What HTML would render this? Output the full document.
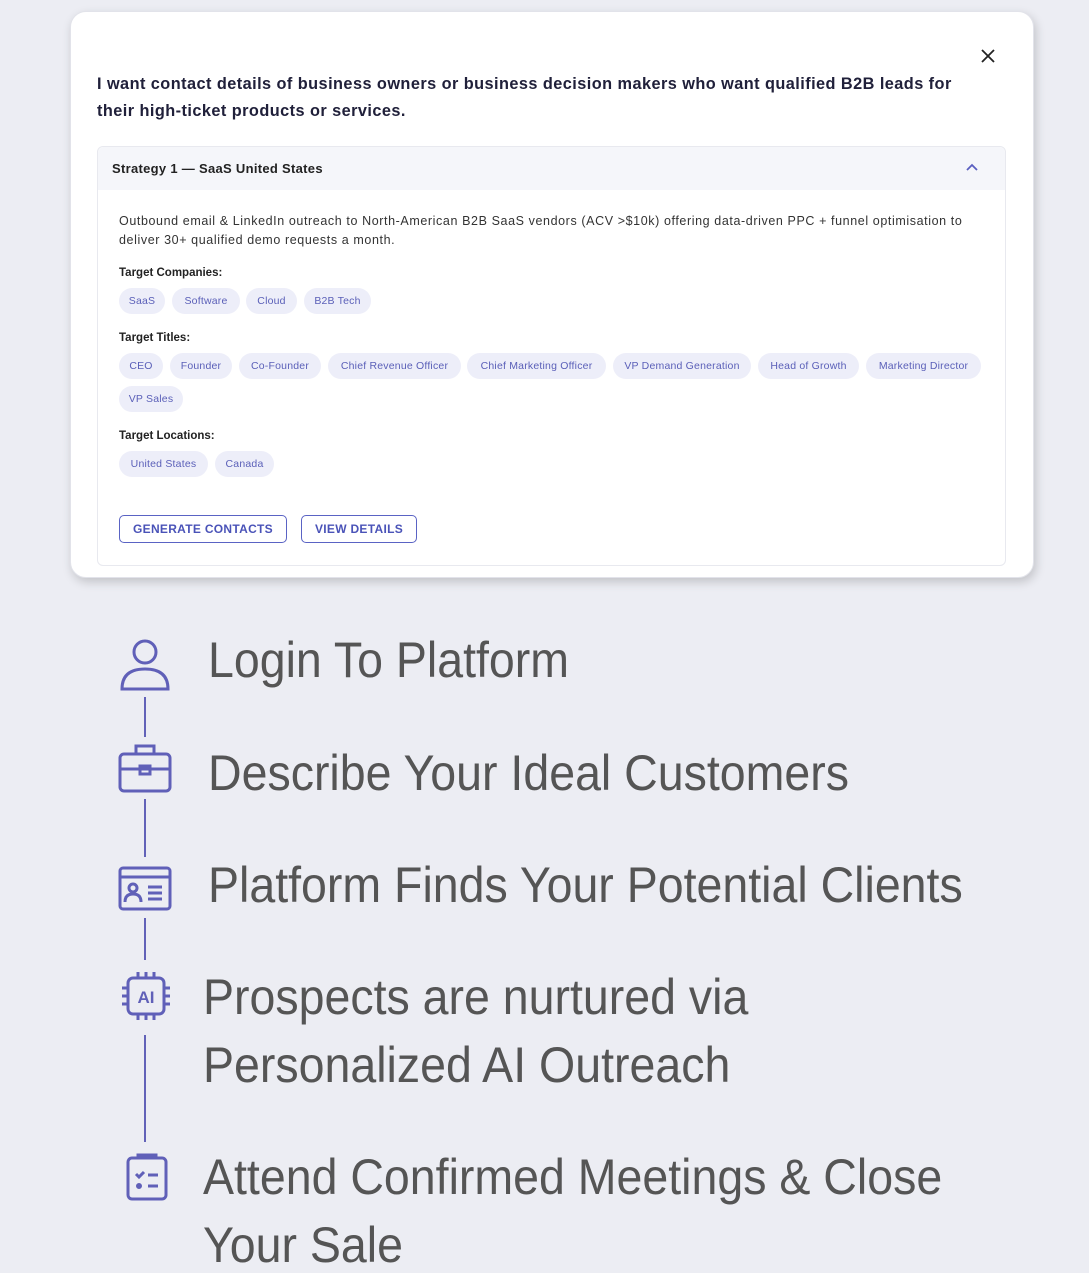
<!DOCTYPE html>
<html><head><meta charset="utf-8"><style>
*{margin:0;padding:0;box-sizing:border-box}
body{width:1089px;height:1273px;background:#ecedf3;font-family:"Liberation Sans",sans-serif;position:relative;overflow:hidden}
.a{position:absolute}
.card{left:70px;top:11px;width:964px;height:567px;background:#fff;border-radius:16px;box-shadow:2px 4px 10px rgba(0,0,0,.18);border:1px solid #e2e3ea}
.panel{left:97px;top:146px;width:909px;height:420px;border:1px solid #e8e9ef;border-radius:6px;background:#fff}
.ph{left:98px;top:147px;width:907px;height:43px;background:#f5f6fa;border-radius:6px 6px 0 0}
.h{font-weight:bold;color:#20203a;font-size:16.3px;white-space:nowrap;letter-spacing:.45px}
.lab{font-weight:bold;font-size:11.5px;color:#222;white-space:nowrap}
.chip{height:26px;border-radius:13px;background:#edeef9;color:#5a5fb8;font-size:10.5px;text-align:center;line-height:26px;white-space:nowrap;letter-spacing:.2px}
.btn{height:28px;border:1px solid #5a63c4;border-radius:5px;color:#4a53b8;font-weight:bold;font-size:12px;text-align:center;line-height:26px;letter-spacing:.3px}
.t{color:#555;font-size:50px;white-space:nowrap;transform:scaleX(.93);transform-origin:0 0;line-height:1}
.ln{position:absolute;left:144px;width:2px;background:#6262b8}
svg{position:absolute;overflow:visible}
</style></head><body>
<div class="a card"></div>
<svg style="left:980px;top:48px" width="16" height="16"><path d="M2 2L14 14M14 2L2 14" stroke="#222" stroke-width="1.8"/></svg>
<div class="a h" style="left:97px;top:75px">I want contact details of business owners or business decision makers who want qualified B2B leads for</div>
<div class="a h" style="left:97px;top:102px">their high-ticket products or services.</div>
<div class="a panel"></div><div class="a ph"></div>
<div class="a" style="left:112px;top:161px;font-weight:bold;font-size:13px;color:#222;letter-spacing:.3px">Strategy 1 — SaaS United States</div>
<svg style="left:966px;top:163px" width="12" height="8"><path d="M1 7L6 2L11 7" stroke="#5a5fc0" stroke-width="1.8" fill="none"/></svg>
<div class="a" style="left:119px;top:212px;font-size:12.5px;color:#333;line-height:19px;width:900px;letter-spacing:.6px;white-space:nowrap">Outbound email &amp; LinkedIn outreach to North-American B2B SaaS vendors (ACV &gt;$10k) offering data-driven PPC + funnel optimisation to<br>deliver 30+ qualified demo requests a month.</div>
<div class="a lab" style="left:119px;top:267px">Target Companies:</div>
<div class="a chip" style="left:119px;top:288px;width:46px">SaaS</div>
<div class="a chip" style="left:172px;top:288px;width:68px">Software</div>
<div class="a chip" style="left:246px;top:288px;width:51px">Cloud</div>
<div class="a chip" style="left:304px;top:288px;width:67px">B2B Tech</div>
<div class="a lab" style="left:119px;top:332px">Target Titles:</div>
<div class="a chip" style="left:119px;top:353px;width:44px">CEO</div>
<div class="a chip" style="left:170px;top:353px;width:62px">Founder</div>
<div class="a chip" style="left:239px;top:353px;width:82px">Co-Founder</div>
<div class="a chip" style="left:328px;top:353px;width:133px">Chief Revenue Officer</div>
<div class="a chip" style="left:467px;top:353px;width:139px">Chief Marketing Officer</div>
<div class="a chip" style="left:613px;top:353px;width:138px">VP Demand Generation</div>
<div class="a chip" style="left:758px;top:353px;width:101px">Head of Growth</div>
<div class="a chip" style="left:866px;top:353px;width:115px">Marketing Director</div>
<div class="a chip" style="left:119px;top:386px;width:64px">VP Sales</div>
<div class="a lab" style="left:119px;top:430px">Target Locations:</div>
<div class="a chip" style="left:119px;top:451px;width:89px">United States</div>
<div class="a chip" style="left:215px;top:451px;width:59px">Canada</div>
<div class="a btn" style="left:119px;top:515px;width:168px">GENERATE CONTACTS</div>
<div class="a btn" style="left:301px;top:515px;width:116px">VIEW DETAILS</div>

<svg style="left:118px;top:636px" width="52" height="56"><g stroke="#6060b8" stroke-width="3" fill="none"><circle cx="27" cy="16" r="11"/><path d="M4 53Q4 33 27 33Q50 33 50 53Z"/></g></svg>
<div class="ln" style="top:697px;height:40px"></div>
<svg style="left:118px;top:742px" width="54" height="52"><g stroke="#6060b8" stroke-width="3" fill="none"><rect x="2" y="12" width="50" height="37" rx="4"/><path d="M18 12V4h18v8M2 27h50"/><rect x="22" y="24" width="10" height="8"/></g></svg>
<div class="ln" style="top:799px;height:58px"></div>
<svg style="left:118px;top:866px" width="54" height="46"><g stroke="#6060b8" stroke-width="3" fill="none"><rect x="2" y="2" width="50" height="41" rx="3"/><path d="M2 11h50"/><circle cx="15" cy="22" r="4"/><path d="M7 36Q7 28 15 28Q23 28 23 36M30 21h14M30 27h14M30 33h14"/></g></svg>
<div class="ln" style="top:918px;height:42px"></div>
<svg style="left:120px;top:970px" width="52" height="54"><g stroke="#6060b8" stroke-width="3" fill="none"><rect x="8" y="8" width="36" height="36" rx="5"/><path d="M18 2v6M26 2v6M34 2v6M18 44v6M26 44v6M34 44v6M2 18h6M2 26h6M2 34h6M44 18h6M44 26h6M44 34h6"/></g><text x="26" y="33" text-anchor="middle" font-family="Liberation Sans" font-weight="bold" font-size="17" fill="#6060b8">AI</text></svg>
<div class="ln" style="top:1035px;height:107px"></div>
<svg style="left:126px;top:1150px" width="42" height="52"><g stroke="#6060b8" stroke-width="3" fill="none"><rect x="2" y="8" width="38" height="41" rx="4"/><path d="M12 8V5h18v3"/><path d="M10 24l3 3 5-5M22 25h10M22 36h10"/><circle cx="13" cy="36" r="1.5"/></g></svg>

<div class="a t" style="left:208px;top:635px">Login To Platform</div>
<div class="a t" style="left:208px;top:748px">Describe Your Ideal Customers</div>
<div class="a t" style="left:208px;top:860px">Platform Finds Your Potential Clients</div>
<div class="a t" style="left:203px;top:972px">Prospects are nurtured via</div>
<div class="a t" style="left:203px;top:1040px">Personalized AI Outreach</div>
<div class="a t" style="left:203px;top:1152px">Attend Confirmed Meetings &amp; Close</div>
<div class="a t" style="left:203px;top:1220px">Your Sale</div>
</body></html>
